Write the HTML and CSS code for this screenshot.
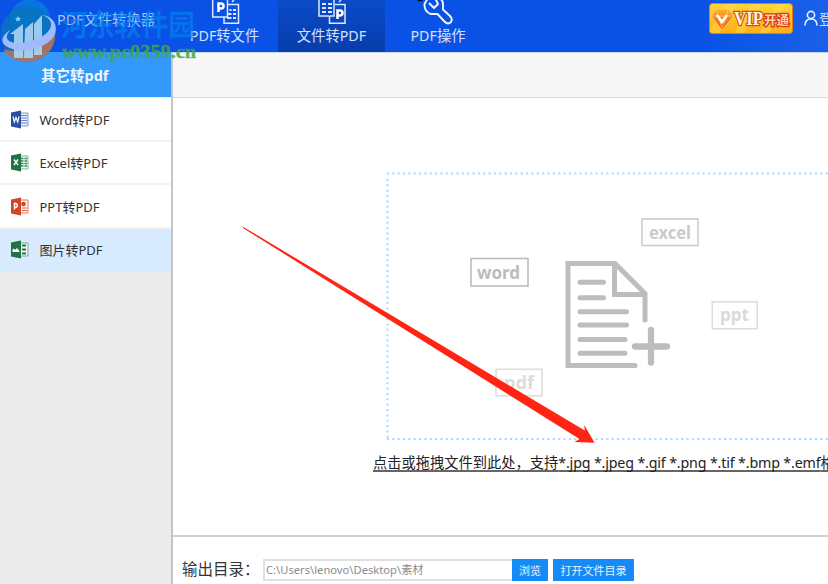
FILE: index.html
```html
<!DOCTYPE html>
<html lang="zh-CN">
<head>
<meta charset="utf-8">
<title>PDF文件转换器</title>
<link rel="stylesheet" href="styles.css">
</head>
<body>
<div class="app">
  <header class="topbar">
    <div class="brand">PDF文件转换器</div>
    <nav class="tabs">
      <a class="tab">
        <svg class="tab-icon" width="30" height="26" viewBox="0 0 30 26" fill="none" stroke="#dce9ff" stroke-width="1.5">
          <path d="M14 17H2.700V-2H17.500V4M17.500 4.500H28.500V23.300H14V17H17.500V4M22 2l2 -2"/>
          <path d="M19.500 10h2M23 10h3M17 14h4.500M23 14h3M17 18h4.500M23 18h3" stroke-width="2"/>
          <path d="M8.500 12V3.500h2.500a2.500 2.500 0 0 1 0 5h-2.500" stroke="#fff" stroke-width="2.600"/>
        </svg>
        <span>PDF转文件</span>
      </a>
      <a class="tab tab-active">
        <svg class="tab-icon" width="30" height="26" viewBox="0 0 30 26" fill="none" stroke="#dce9ff" stroke-width="1.500">
          <path d="M12 16H2V-2H17V7M12.500 16V23.300H28V4.500H18M12.500 16H17V7M22 2l2-2"/>
          <path d="M5 4h4M11 4h4M5 8h4M11 8h4M5 12h4M11 12h4" stroke-width="2"/>
          <path d="M20.500 19v-8.500h2.500a2.500 2.500 0 0 1 0 5h-2.500" stroke="#fff" stroke-width="2.600"/>
        </svg>
        <span>文件转PDF</span>
      </a>
      <a class="tab tab-tools">
        <svg class="tab-icon" width="30" height="26" viewBox="0 0 30 26" fill="none" stroke="#f2f6ff" stroke-width="1.900" stroke-linejoin="round">
          <path d="M5 -2 1.500 4Q1 11 7.500 14L14.500 14L21.500 21.500Q25 25 28 22Q30 19 27 16L20 9.500V4Q20 0 16 -2M12 -2 15 4 11 8 6 3"/>
        </svg>
        <span>PDF操作</span>
      </a>
    </nav>
    <div class="account">
      <svg class="vip" width="84" height="32" viewBox="0 0 84 32">
        <defs>
          <linearGradient id="gold" x2="0" y2="1"><stop stop-color="#ffd33a"/><stop offset="1" stop-color="#ffae14"/></linearGradient>
          <linearGradient id="gem" x2="0" y2="1"><stop stop-color="#ffb32e"/><stop offset="1" stop-color="#ee4a0c"/></linearGradient>
        </defs>
        <rect x=".5" y=".5" width="83" height="30" rx="3" fill="url(#gold)" stroke="#e87819"/>
        <path d="M18 1h10L10 30H1V27ZM43 1h10L35 30H25ZM68 1h10L60 30H50Z" fill="#ffe052" opacity=".45"/>
        <path d="M7 6H19L25 13 13 27 2 13Z" fill="url(#gem)" stroke="#ffcd63"/>
        <path d="M7 6 9 13 13 25 18 13 19 6M2 13H25" fill="none" stroke="#ffcf51" stroke-width=".8"/>
        <path d="M8 12 13 19 18 12" fill="none" stroke="#fff" stroke-width="2.500"/>
        <text class="vip-word" x="25" y="22" textLength="29" lengthAdjust="spacingAndGlyphs">VIP</text>
        <text class="vip-open" x="55" y="22" textLength="25">开通</text>
      </svg>
      <svg class="user" width="14" height="17" viewBox="0 0 14 17" fill="none" stroke="#e8f0ff" stroke-width="1.600"><circle cx="7" cy="5" r="3.600"/><path d="M1 15.500C1 11 3.500 9 7 9s6 2 6 6.500"/></svg>
      <span class="login">登录</span>
    </div>
  </header>

  <div class="body">
    <aside class="sidebar">
      <h2 class="side-title">其它转pdf</h2>
      <ul class="menu">
        <li class="item">
          <svg class="file" width="20" height="20" viewBox="0 0 20 20"><path fill="#e8eef9" stroke="#7e99cd" d="M9 3h9v13H9z"/><path stroke="#6b8bc8" stroke-width="1.200" d="M11 5.500h6M11 8h6M11 10.500h6M11 13h6"/><path fill="#27519f" d="M1 2.500 11 .5v18L1 16.500z"/><path d="M3 6.500 4.300 12 6 7.500 7.700 12 9 6.500" fill="none" stroke="#fff" stroke-width="1.200"/></svg>
          <span>Word转PDF</span>
        </li>
        <li class="item">
          <svg class="file" width="20" height="20" viewBox="0 0 20 20"><path fill="#eef7f1" stroke="#83b697" d="M9 3h9v13H9z"/><path stroke="#388459" stroke-width="1.500" stroke-dasharray="2.500 1" d="M11 5.500h6M11 8h6M11 10.500h6M11 13h6"/><path fill="#217346" d="M1 2.500 11 .5v18L1 16.500z"/><path d="M4 6.500 8 12M8 6.500 4 12" fill="none" stroke="#fff" stroke-width="1.400"/></svg>
          <span>Excel转PDF</span>
        </li>
        <li class="item">
          <svg class="file" width="20" height="20" viewBox="0 0 20 20"><path fill="#fff1ed" stroke="#e47a60" d="M9 3h9v13H9z"/><path stroke="#dd694c" d="M12 11h5M12 13.500h5"/><circle cx="13.500" cy="7" r="2.300" fill="#d24625"/><path fill="#d24625" d="M1 2.500 11 .5v18L1 16.500z"/><path d="M4.500 12.500V6.500H6a2 2 0 0 1 0 3.800H4.500" fill="none" stroke="#fff" stroke-width="1.500"/></svg>
          <span>PPT转PDF</span>
        </li>
        <li class="item item-active">
          <svg class="file" width="20" height="20" viewBox="0 0 20 20"><path fill="#f2faf5" stroke="#75ab8a" d="M9 3h9v13H9z"/><path stroke="#217346" stroke-width="2" stroke-dasharray="4 1" d="M12 5.500h5M12 9.500h5M12 13.500h5"/><path fill="#217346" d="M1 2.500 11 .5v18L1 16.500z"/><path d="M2.500 12V9.500L4 8.500 5 10 7 8 9.500 11v1z" fill="#fff"/></svg>
          <span>图片转PDF</span>
        </li>
      </ul>
    </aside>

    <main class="main">
      <div class="toolbar"></div>
      <section class="workspace">
        <svg class="drop" width="456" height="268" viewBox="386 172 456 268">
          <path class="dots" d="M387 173.500H850M387.500 179V439M387 439H850"/>
          <g fill="none" stroke-width="1.600">
            <rect x="471" y="258.500" width="57" height="27.500" stroke="#bcbcbc"/>
            <rect x="642" y="219" width="56" height="26.500" stroke="#cdcdcd"/>
            <rect x="712.300" y="301.800" width="45" height="27" stroke="#dedede"/>
            <rect x="496" y="369.300" width="46" height="26.500" stroke="#dedede"/>
          </g>
          <g class="tag">
            <text x="477" y="279" textLength="43" lengthAdjust="spacingAndGlyphs" fill="#bcbcbc">word</text>
            <text x="649" y="239" textLength="42" lengthAdjust="spacingAndGlyphs" fill="#cbcbcb">excel</text>
            <text x="720" y="321" textLength="29" lengthAdjust="spacingAndGlyphs" fill="#dadada">ppt</text>
            <text x="504" y="389" textLength="30" lengthAdjust="spacingAndGlyphs" fill="#dcdcdc">pdf</text>
          </g>
          <g fill="none" stroke="#bdbdbd" stroke-width="5" stroke-linecap="round">
            <path d="M635 365.500H568V263.500H615L645 293.500V320M614.500 264V294.500H644"/>
            <path d="M580 282.300h23.500M580 297.700h23.500M580 311.700h46.500M580 325h46.500M580 339.500h45M580 353.300h45"/>
            <path d="M651 330V362.500M635 346.500H667" stroke-width="6.300"/>
          </g>
        </svg>
        <p class="hint">点击或拖拽文件到此处，支持<span class="formats">*.jpg *.jpeg *.gif *.png *.tif *.bmp *.emf</span>格式</p>
      </section>
      <footer class="output">
        <label class="output-label">输出目录：</label>
        <div class="path">C:\Users\lenovo\Desktop\素材</div>
        <button class="btn browse">浏览</button>
        <button class="btn open">打开文件目录</button>
      </footer>
    </main>
  </div>

  <svg class="overlay" width="828" height="584" viewBox="0 0 828 584">
    <path fill="#ff2413" d="M242.500 226.500 584.800 430.500 584.300 425 594.500 442.800 574.500 442 579.500 439 243 228Z"/>
    <path fill="#050b1d" d="M417 0h6l-1.500 1.300h-3z"/>
    <g class="mark-logo">
      <circle cx="30" cy="19" r="20" fill="#0693db" opacity=".55"/>
      <circle cx="28" cy="34" r="27.500" fill="#0877bd" opacity=".85"/>
      <path d="M3 49C18 54 43 48 55 31 57 47 45 61.500 28 61.500 16 61.500 7 57 3 49Z" fill="#ad7358"/>
      <path d="M10 34 23 24V58H14V34ZM25 29 33 22V58H24ZM34 24 42 15V55H34Z" fill="#aed5f3" opacity=".95"/>
      <path d="M42 15C53 16 58 25 55 34 49 49 19 55 6 46 -1 41 3 35 11 29 4 37 6 41 15 43 30 44 50 36 51 25 51 20 48 17 42 15Z" fill="#aabfff"/>
      <path d="m18 16 1 2h2l-1.500 1.500.5 2-2-1-2 1 .5-2L15 18h2z" fill="#94d7f6"/>
    </g>
    <text class="mark-name" x="61" y="36" textLength="134" lengthAdjust="spacingAndGlyphs">河东软件园</text>
    <text class="mark-url" x="62" y="58" textLength="134" lengthAdjust="spacingAndGlyphs">www.pc0359.cn</text>
  </svg>
</div>
</body>
</html>
```
FILE: styles.css
```css
* { box-sizing: border-box; }
body {
  margin: 0;
  overflow: hidden;
  font-family: "Noto Sans", "Noto Sans CJK SC", sans-serif;
  font-size: 14px;
  color: #333;
}
.app {
  position: relative;
  display: flex;
  flex-direction: column;
  width: 828px;
  height: 584px;
  overflow: hidden;
  background: #fff;
}

/* Top bar */
.topbar {
  display: flex;
  height: 52px;
  flex: none;
  background: linear-gradient(90deg, #0a52e6 0 700px, #1a60e8 828px);
  color: #d3e1ff;
}
.brand {
  width: 171px;
  flex: none;
  padding: 9px 0 0 57px;
  line-height: 22px;
  font-size: 14.300px;
  white-space: nowrap;
  color: #a9cbfa;
}
.tabs { display: flex; flex: none; }
.tab {
  display: flex;
  flex-direction: column;
  align-items: center;
  flex: none;
  width: 107px;
  height: 52px;
  font-size: 14.300px;
  line-height: 22px;
  white-space: nowrap;
}
.tab-icon { flex: none; margin-bottom: -1px; }
.tab-active { background: linear-gradient(#0a4bc9, #083dab); }
.tab-tools { width: 106px; }
.account {
  display: flex;
  flex: 1;
  align-items: flex-start;
  min-width: 0;
  padding-left: 218px;
}
.vip { flex: none; margin-top: 3px; }
.vip-word {
  font: bold 19px "Liberation Serif", serif;
  fill: #fff4df;
  stroke: #d64b18;
  stroke-width: 2.5px;
  paint-order: stroke;
}
.vip-open {
  font: bold 12.500px "Noto Sans CJK SC", sans-serif;
  fill: #ffcfaa;
  stroke: #d4380f;
  stroke-width: 2.5px;
  paint-order: stroke;
}
.user { flex: none; margin: 10px 1px 0 11px; }
.login { flex: none; margin-top: 9px; line-height: 20px; white-space: nowrap; }

/* Sidebar */
.body { display: flex; flex: 1; min-height: 0; }
.sidebar {
  width: 173px;
  flex: none;
  border-right: 2px solid #c5c5c5;
  background: #ebebeb;
}
.side-title {
  height: 46px;
  margin: 0;
  padding-left: 41px;
  border-bottom: 1px solid #e4f1fe;
  background: #3399fb;
  color: #edf7ff;
  font-size: 14.500px;
  line-height: 46px;
}
.menu { margin: 0; padding: 0; list-style: none; }
.item {
  display: flex;
  align-items: center;
  height: 43.500px;
  padding-left: 10px;
  border-bottom: 2px solid #f2f2f2;
  background: #fff;
  font-size: 13px;
}
.file { margin-top: 2px; }
.item span { margin: 1px 0 0 9.500px; white-space: nowrap; }
.item-active { border-color: #d8ebfe; background: #d8ebfe; }

/* Drop area */
.main {
  display: flex;
  flex-direction: column;
  flex: 1;
  min-width: 0;
}
.toolbar {
  height: 46px;
  flex: none;
  border-top: 1px solid #c9d9f4;
  border-bottom: 1px solid #d9d9d9;
  background: #f7f7f7;
}
.workspace { height: 437px; flex: none; padding: 74px 0 0 200px; }
.drop { display: block; margin-left: 13px; }
.dots {
  fill: none;
  stroke: #acd5fa;
  stroke-width: 2;
  stroke-dasharray: 2 3.350;
}
.tag { font: bold 18px "Noto Sans", sans-serif; }
.hint {
  margin: 12px 0 0;
  font-size: 14.250px;
  line-height: 22px;
  color: #222;
  white-space: nowrap;
  text-decoration: underline #666;
  text-decoration-thickness: 1.500px;
  text-underline-offset: 2px;
  text-decoration-skip-ink: none;
}
.formats { letter-spacing: -.160px; }

/* Output folder */
.output {
  display: flex;
  align-items: flex-start;
  flex: 1;
  padding: 22px 0 0 9px;
  border-top: 2px solid #d2d2d2;
}
.output-label {
  width: 81px;
  flex: none;
  font-size: 15.500px;
  line-height: 21px;
  white-space: nowrap;
}
.path {
  width: 249px;
  height: 22px;
  flex: none;
  padding-left: 1px;
  border: 2px solid #e0e0e0;
  border-right: 0;
  color: #8c8c8c;
  font-size: 11.200px;
  line-height: 18px;
  white-space: nowrap;
}
.btn {
  height: 22px;
  flex: none;
  padding: 0;
  border: 0;
  background: #158bf8;
  color: #e5f3ff;
  font: 11px/22px "Noto Sans CJK SC", sans-serif;
}
.browse { width: 36px; }
.open { width: 81px; margin-left: 5px; }

/* Arrow and watermark */
.overlay { position: absolute; inset: 0; pointer-events: none; }
.mark-logo { opacity: .95; }
.mark-name {
  font: bold 29px "Noto Sans CJK SC", sans-serif;
  fill: #0088f0;
  opacity: .6;
}
.mark-url {
  font: bold 19px "Liberation Serif", serif;
  fill: #42a64a;
  stroke: #42a64a;
  stroke-width: .4px;
  opacity: .85;
}
```
